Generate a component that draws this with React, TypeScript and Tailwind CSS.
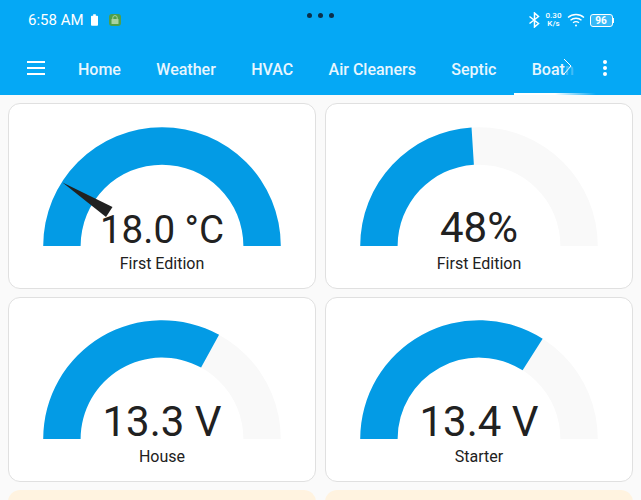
const tabs = ['Home', 'Weather', 'HVAC', 'Air Cleaners', 'Septic']

// half ring from the left end, clockwise, up to `deg` degrees
const arcPath = (deg: number) => {
  const R = 118.8
  const r = 81.4
  const cx = 119
  const cy = 120
  const a = (deg * Math.PI) / 180
  const ox = cx - R * Math.cos(a)
  const oy = cy - R * Math.sin(a)
  const ix = cx - r * Math.cos(a)
  const iy = cy - r * Math.sin(a)
  return `M${cx - R} ${cy} A${R} ${R} 0 0 1 ${ox} ${oy} L${ix} ${iy} A${r} ${r} 0 0 0 ${cx - r} ${cy} Z`
}

interface GaugeProps {
  value: string
  label: string
  deg: number
  needle?: boolean
}

const Gauge = ({ value, label, deg, needle }: GaugeProps) => (
  <div className="h-[185.7px] rounded-xl border border-[#e0e0e0] bg-white pt-[21.5px] flex flex-col items-center relative">
    <svg width="238" height="120" viewBox="0 0 238 120" className="shrink-0">
      <path d={arcPath(180)} fill="#f9f9f9" />
      <path d={arcPath(deg)} fill="#039be5" />
    </svg>
    <div
      className={
        needle
          ? 'absolute top-[101px] left-0 right-0 text-center text-[38.5px] leading-[50px] text-[#212121]'
          : 'absolute top-[99px] left-0 right-0 text-center text-[42px] leading-[50px] text-[#212121]'
      }
    >
      {value}
    </div>
    {needle && (
      <svg width="60" height="40" viewBox="0 0 60 40" className="absolute left-[53px] top-[78px]">
        <path d="M0.5 0.5 L50.5 25 L44 35 Z" fill="#212121" />
      </svg>
    )}
    <div className="mt-[6px] text-[16px] leading-[24px] text-[#212121]">{label}</div>
  </div>
)

const App = () => {
  return (
    <div className="w-[641px] h-[500px] overflow-hidden bg-[#fafafa] font-['Roboto',sans-serif]">
      <div className="h-[95px] bg-[#05a8f5] text-white relative">
        {/* status bar */}
        <div className="h-[40px] pl-[28px] pr-[27.5px] flex items-center relative">
          <span className="text-[15px] leading-none">6:58 AM</span>
          <svg width="7" height="12" viewBox="0 0 8 13" className="ml-[7px]">
            <path d="M2.5 0h3v1.5H7a1 1 0 0 1 1 1V12a1 1 0 0 1-1 1H1a1 1 0 0 1-1-1V2.5a1 1 0 0 1 1-1h1.5z" fill="#fff" />
          </svg>
          <svg width="12" height="12" viewBox="0 0 12 12" className="ml-[11px]">
            <rect width="12" height="12" rx="3" fill="#4f9f4a" />
            <path d="M3.8 5V3.8a2.2 2.2 0 0 1 4.4 0V5" fill="none" stroke="#a9d3a2" strokeWidth="1" />
            <rect x="2.5" y="5" width="7" height="5" rx="0.5" fill="#a9d3a2" />
          </svg>
          <div className="absolute left-[307px] top-[12.5px] flex gap-[6px]">
            <span className="w-[5px] h-[5px] rounded-full bg-[#0b2f4a]" />
            <span className="w-[5px] h-[5px] rounded-full bg-[#0b2f4a]" />
            <span className="w-[5px] h-[5px] rounded-full bg-[#0b2f4a]" />
          </div>
          <div className="ml-auto flex items-center">
            <svg width="13" height="16" viewBox="0 0 12 16" fill="none" stroke="#fff" strokeWidth="1.5">
              <path d="M1 4.5 L10 11.5 L6 15 V1 L10 4.5 L1 11.5" />
            </svg>
            <div className="ml-[4px] w-[18px] text-[8px] leading-[8px] font-medium text-center">
              <div>0.30</div>
              <div>K/s</div>
            </div>
            <svg width="18" height="14" viewBox="0 0 18 14" fill="none" stroke="#fff" strokeWidth="1.3" className="ml-[4px]">
              <path d="M1 4.5 C5.5 0.5 12.5 0.5 17 4.5" />
              <path d="M3.5 7.2 C6.5 4.6 11.5 4.6 14.5 7.2" />
              <path d="M6 9.8 C7.8 8.4 10.2 8.4 12 9.8" />
              <circle cx="9" cy="12.5" r="1" fill="#fff" stroke="none" />
            </svg>
            <div className="ml-[5px] w-[23px] h-[13px] rounded-[3px] border border-white bg-white/20 text-[10px] leading-[11px] font-bold text-center">
              96
            </div>
            <span className="w-[1px] h-[5px] bg-white" />
          </div>
        </div>
        {/* app toolbar */}
        <div className="h-[55px] flex items-start relative">
          <svg width="18" height="14" viewBox="0 0 18 14" fill="#fff" className="ml-[27px] mt-[20.5px] shrink-0">
            <rect width="18" height="2" />
            <rect y="6" width="18" height="2" />
            <rect y="12" width="18" height="2" />
          </svg>
          <nav className="ml-[15.3px] flex h-[55px] text-[16px] font-medium text-[#e8f6fe]">
            {tabs.map((t) => (
              <span key={t} className="px-[17.7px] pt-[19px] leading-[21px]">
                {t}
              </span>
            ))}
            <span className="relative w-[82px] pl-[17.7px] pt-[19px] leading-[21px] overflow-hidden">
              Boat
              <span className="text-white/25">n</span>
              <span className="absolute left-0 right-0 bottom-0 h-[2px] bg-gradient-to-r from-white from-50% to-transparent" />
            </span>
          </nav>
          <svg width="10" height="18" viewBox="0 0 10 18" fill="none" stroke="#fff" strokeWidth="1" className="absolute left-[563px] top-[18px]">
            <path d="M1 1 L8 8 L1 16" />
          </svg>
          <svg width="6" height="18" viewBox="0 0 6 18" fill="#fff" className="absolute left-[602px] top-[19px]">
            <circle cx="3" cy="3" r="2" />
            <circle cx="3" cy="9" r="2" />
            <circle cx="3" cy="15" r="2" />
          </svg>
        </div>
      </div>
      {/* gauges */}
      <div className="grid grid-cols-2 gap-x-[9px] gap-y-[8px] pt-[8px] px-[8px]">
        <Gauge value="18.0 °C" label="First Edition" deg={180} needle />
        <Gauge value="48%" label="First Edition" deg={86.4} />
        <Gauge value="13.3 V" label="House" deg={118.7} />
        <Gauge value="13.4 V" label="Starter" deg={122.4} />
        <div className="h-[40px] rounded-xl bg-[#fff3e0]" />
        <div className="h-[40px] rounded-xl bg-[#fff3e0]" />
      </div>
    </div>
  )
}

export default App
